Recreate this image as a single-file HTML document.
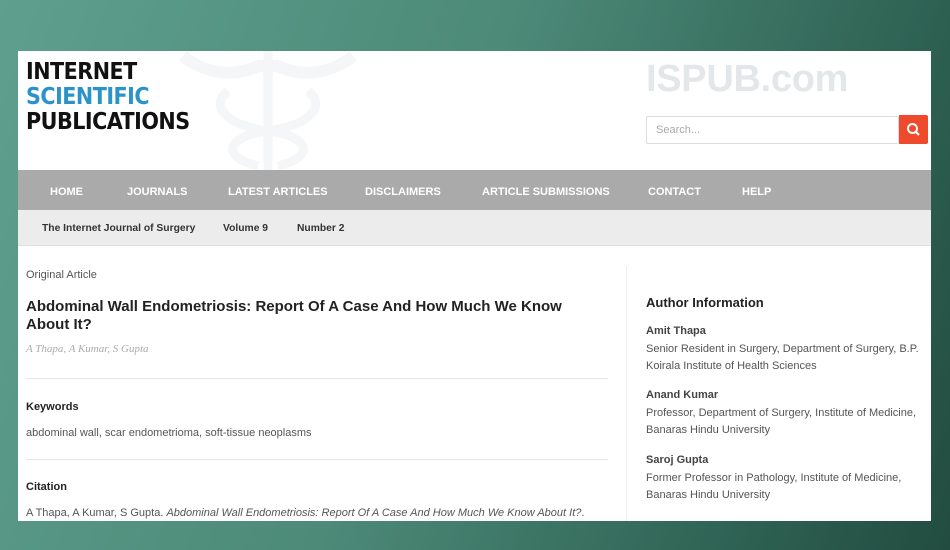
<!DOCTYPE html>
<html><head><meta charset="utf-8"><style>
*{margin:0;padding:0;box-sizing:border-box}
body{width:950px;height:550px;overflow:hidden;background:linear-gradient(110deg,#5e9f8d 0%,#4d8a78 45%,#2f6354 80%,#224c40 100%);font-family:"Liberation Sans",sans-serif;position:relative}
#p{position:absolute;left:18px;top:51px;width:913px;height:470px;background:#fff;overflow:hidden}
.a{position:absolute;white-space:nowrap}
.logo{font-family:"DejaVu Sans Condensed","DejaVu Sans",sans-serif;font-weight:bold;font-size:23px;line-height:25px;letter-spacing:-0.5px;color:#111}
.nav{position:absolute;left:0;top:119px;width:913px;height:40px;background:#aaa}
.nav span{position:absolute;top:16px;color:#fff;font-family:"Liberation Sans",sans-serif;font-weight:bold;font-size:11px}
.sub{position:absolute;left:0;top:159px;width:913px;height:36px;background:#ececec;border-bottom:1px solid #e0e0e0}
.sub span{position:absolute;top:13px;font-size:10.3px;font-weight:bold;color:#333}
.hr{position:absolute;left:8px;width:582px;height:1px;background:#e6e6e6}
.h{font-weight:bold;font-size:11px;color:#222}
.t{font-size:11px;color:#555}
</style></head><body>
<div id="p">
<svg class="a" style="left:150px;top:0" width="200" height="119" viewBox="0 0 200 119">
<g fill="none" stroke="#f4f6f8" stroke-width="9">
<path d="M100 0 V119"/>
<path d="M60 40 C40 55 60 75 100 80 C140 85 150 105 110 115"/>
<path d="M140 40 C160 55 140 75 100 80 C60 85 50 105 90 115"/>
</g>
<path d="M15 5 C40 25 70 25 90 15 L110 15 C130 25 160 25 185 5" fill="none" stroke="#f4f6f8" stroke-width="12"/>
</svg>
<div class="a logo" style="left:8px;top:9px">INTERNET</div>
<div class="a logo" style="left:8px;top:34px;color:#2a93c9">SCIENTIFIC</div>
<div class="a logo" style="left:8px;top:59px">PUBLICATIONS</div>
<div class="a" style="left:628px;top:7px;font-size:38px;font-weight:bold;color:#e4e7ea;letter-spacing:-0.3px">ISPUB.com</div>
<div class="a" style="left:628px;top:65px;width:253px;height:28px;border:1px solid #ddd;border-radius:2px;font-size:11px;color:#aaa;padding:7px 0 0 9px">Search...</div>
<div class="a" style="left:881px;top:64px;width:29px;height:29px;background:#f04a2c;border-radius:0 2px 2px 0">
<svg width="29" height="29"><circle cx="13.5" cy="13.5" r="4.5" fill="none" stroke="#fff" stroke-width="2"/><path d="M16.8 16.8 L20 20" stroke="#fff" stroke-width="2.2"/></svg></div>
<div class="nav">
<span style="left:32px">HOME</span><span style="left:109px">JOURNALS</span><span style="left:210px">LATEST ARTICLES</span><span style="left:347px">DISCLAIMERS</span><span style="left:464px">ARTICLE SUBMISSIONS</span><span style="left:630px">CONTACT</span><span style="left:724px">HELP</span>
</div>
<div class="sub"><span style="left:24px">The Internet Journal of Surgery</span><span style="left:205px">Volume 9</span><span style="left:279px">Number 2</span></div>
<div class="a" style="left:608px;top:215px;width:1px;height:255px;background:#eee"></div>
<div class="a t" style="left:8px;top:218px">Original Article</div>
<div class="a" style="left:8px;top:247px;font-size:15px;font-weight:bold;color:#222;line-height:18px">Abdominal Wall Endometriosis: Report Of A Case And How Much We Know<br>About It?</div>
<div class="a" style="left:8px;top:292px;font-family:'Liberation Serif',serif;font-style:italic;font-size:11px;color:#aaa">A Thapa, A Kumar, S Gupta</div>
<div class="hr" style="top:327px"></div>
<div class="a h" style="left:8px;top:350px">Keywords</div>
<div class="a t" style="left:8px;top:376px">abdominal wall, scar endometrioma, soft-tissue neoplasms</div>
<div class="hr" style="top:408px"></div>
<div class="a h" style="left:8px;top:430px">Citation</div>
<div class="a t" style="left:8px;top:456px">A Thapa, A Kumar, S Gupta. <i>Abdominal Wall Endometriosis: Report Of A Case And How Much We Know About It?</i>.</div>
<div class="a" style="left:628px;top:244px;font-size:13px;font-weight:bold;color:#222">Author Information</div>
<div class="a h" style="left:628px;top:274px;color:#444">Amit Thapa</div>
<div class="a t" style="left:628px;top:290px;line-height:16.5px">Senior Resident in Surgery, Department of Surgery, B.P.<br>Koirala Institute of Health Sciences</div>
<div class="a h" style="left:628px;top:338px;color:#444">Anand Kumar</div>
<div class="a t" style="left:628px;top:354px;line-height:16.5px">Professor, Department of Surgery, Institute of Medicine,<br>Banaras Hindu University</div>
<div class="a h" style="left:628px;top:403px;color:#444">Saroj Gupta</div>
<div class="a t" style="left:628px;top:419px;line-height:16.5px">Former Professor in Pathology, Institute of Medicine,<br>Banaras Hindu University</div>
</div>
</body></html>
